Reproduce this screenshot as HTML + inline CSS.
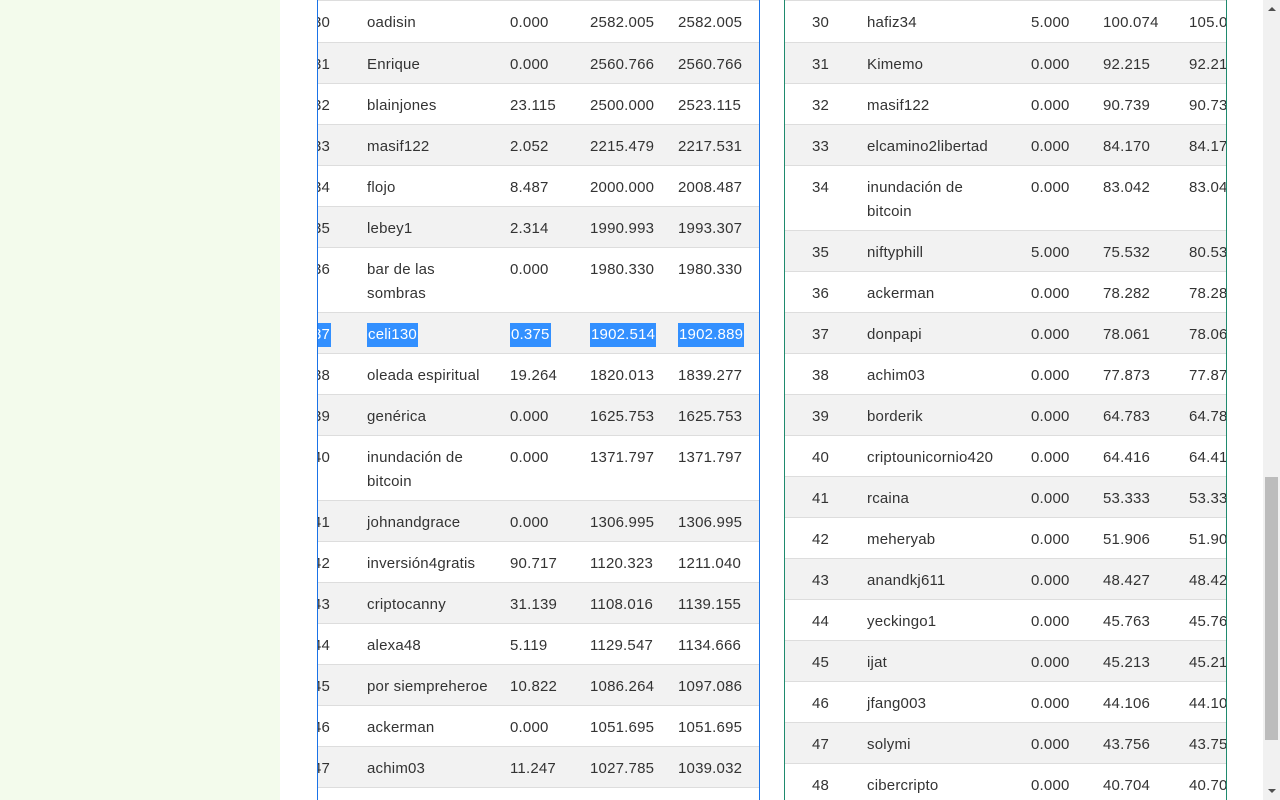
<!DOCTYPE html>
<html><head><meta charset="utf-8"><style>
*{margin:0;padding:0;box-sizing:border-box}
body{width:1280px;height:800px;overflow:hidden;background:#fff;font-family:"Liberation Sans",sans-serif;font-size:15px;color:#333;position:relative}
.side{position:absolute;left:0;top:0;width:280px;height:800px;background:#f3fbec}
.tbl{position:absolute;top:0;height:800px;overflow:hidden}
#t1{left:317px;width:443px;border-left:1px solid #1a73e8;border-right:1px solid #1a73e8}
#t2{left:784px;width:443px;border-left:1px solid #1f8a6e;border-right:1px solid #1f8a6e}
.r{position:absolute;left:0;width:1000px;border-top:1px solid #ddd}
.g{background:#f2f2f2}
.c{position:absolute;top:10px;line-height:24px;letter-spacing:0.2px}
.sel{background:#3390ff;color:#fff;padding:0 1px}
.sb{position:absolute;left:1263px;top:0;width:17px;height:800px;background:#f1f1f1}
.th{position:absolute;left:2px;top:477px;width:13px;height:263px;background:#bcbcbc}
</style></head><body>
<div class="side"></div>

<div class="tbl" id="t1">
<div class="r" style="top:0;height:42px"><span class="c" style="left:-5px">30</span><span class="c" style="left:49px">oadisin</span><span class="c" style="left:192px">0.000</span><span class="c" style="left:272px">2582.005</span><span class="c" style="left:360px">2582.005</span></div>
<div class="r g" style="top:42px;height:41px"><span class="c" style="left:-5px">31</span><span class="c" style="left:49px">Enrique</span><span class="c" style="left:192px">0.000</span><span class="c" style="left:272px">2560.766</span><span class="c" style="left:360px">2560.766</span></div>
<div class="r" style="top:83px;height:41px"><span class="c" style="left:-5px">32</span><span class="c" style="left:49px">blainjones</span><span class="c" style="left:192px">23.115</span><span class="c" style="left:272px">2500.000</span><span class="c" style="left:360px">2523.115</span></div>
<div class="r g" style="top:124px;height:41px"><span class="c" style="left:-5px">33</span><span class="c" style="left:49px">masif122</span><span class="c" style="left:192px">2.052</span><span class="c" style="left:272px">2215.479</span><span class="c" style="left:360px">2217.531</span></div>
<div class="r" style="top:165px;height:41px"><span class="c" style="left:-5px">34</span><span class="c" style="left:49px">flojo</span><span class="c" style="left:192px">8.487</span><span class="c" style="left:272px">2000.000</span><span class="c" style="left:360px">2008.487</span></div>
<div class="r g" style="top:206px;height:41px"><span class="c" style="left:-5px">35</span><span class="c" style="left:49px">lebey1</span><span class="c" style="left:192px">2.314</span><span class="c" style="left:272px">1990.993</span><span class="c" style="left:360px">1993.307</span></div>
<div class="r" style="top:247px;height:65px"><span class="c" style="left:-5px">36</span><span class="c" style="left:49px">bar de las<br>sombras</span><span class="c" style="left:192px">0.000</span><span class="c" style="left:272px">1980.330</span><span class="c" style="left:360px">1980.330</span></div>
<div class="r g" style="top:312px;height:41px"><span class="c sel" style="left:-6px">37</span><span class="c sel" style="left:49px">celi130</span><span class="c sel" style="left:192px">0.375</span><span class="c sel" style="left:272px">1902.514</span><span class="c sel" style="left:360px">1902.889</span></div>
<div class="r" style="top:353px;height:41px"><span class="c" style="left:-5px">38</span><span class="c" style="left:49px">oleada espiritual</span><span class="c" style="left:192px">19.264</span><span class="c" style="left:272px">1820.013</span><span class="c" style="left:360px">1839.277</span></div>
<div class="r g" style="top:394px;height:41px"><span class="c" style="left:-5px">39</span><span class="c" style="left:49px">genérica</span><span class="c" style="left:192px">0.000</span><span class="c" style="left:272px">1625.753</span><span class="c" style="left:360px">1625.753</span></div>
<div class="r" style="top:435px;height:65px"><span class="c" style="left:-5px">40</span><span class="c" style="left:49px">inundación de<br>bitcoin</span><span class="c" style="left:192px">0.000</span><span class="c" style="left:272px">1371.797</span><span class="c" style="left:360px">1371.797</span></div>
<div class="r g" style="top:500px;height:41px"><span class="c" style="left:-5px">41</span><span class="c" style="left:49px">johnandgrace</span><span class="c" style="left:192px">0.000</span><span class="c" style="left:272px">1306.995</span><span class="c" style="left:360px">1306.995</span></div>
<div class="r" style="top:541px;height:41px"><span class="c" style="left:-5px">42</span><span class="c" style="left:49px">inversión4gratis</span><span class="c" style="left:192px">90.717</span><span class="c" style="left:272px">1120.323</span><span class="c" style="left:360px">1211.040</span></div>
<div class="r g" style="top:582px;height:41px"><span class="c" style="left:-5px">43</span><span class="c" style="left:49px">criptocanny</span><span class="c" style="left:192px">31.139</span><span class="c" style="left:272px">1108.016</span><span class="c" style="left:360px">1139.155</span></div>
<div class="r" style="top:623px;height:41px"><span class="c" style="left:-5px">44</span><span class="c" style="left:49px">alexa48</span><span class="c" style="left:192px">5.119</span><span class="c" style="left:272px">1129.547</span><span class="c" style="left:360px">1134.666</span></div>
<div class="r g" style="top:664px;height:41px"><span class="c" style="left:-5px">45</span><span class="c" style="left:49px">por siempreheroe</span><span class="c" style="left:192px">10.822</span><span class="c" style="left:272px">1086.264</span><span class="c" style="left:360px">1097.086</span></div>
<div class="r" style="top:705px;height:41px"><span class="c" style="left:-5px">46</span><span class="c" style="left:49px">ackerman</span><span class="c" style="left:192px">0.000</span><span class="c" style="left:272px">1051.695</span><span class="c" style="left:360px">1051.695</span></div>
<div class="r g" style="top:746px;height:41px"><span class="c" style="left:-5px">47</span><span class="c" style="left:49px">achim03</span><span class="c" style="left:192px">11.247</span><span class="c" style="left:272px">1027.785</span><span class="c" style="left:360px">1039.032</span></div>
<div class="r" style="top:787px;height:41px"></div>
</div>

<div class="tbl" id="t2">
<div class="r" style="top:0;height:42px"><span class="c" style="left:27px">30</span><span class="c" style="left:82px">hafiz34</span><span class="c" style="left:246px">5.000</span><span class="c" style="left:318px">100.074</span><span class="c" style="left:404px">105.074</span></div>
<div class="r g" style="top:42px;height:41px"><span class="c" style="left:27px">31</span><span class="c" style="left:82px">Kimemo</span><span class="c" style="left:246px">0.000</span><span class="c" style="left:318px">92.215</span><span class="c" style="left:404px">92.215</span></div>
<div class="r" style="top:83px;height:41px"><span class="c" style="left:27px">32</span><span class="c" style="left:82px">masif122</span><span class="c" style="left:246px">0.000</span><span class="c" style="left:318px">90.739</span><span class="c" style="left:404px">90.739</span></div>
<div class="r g" style="top:124px;height:41px"><span class="c" style="left:27px">33</span><span class="c" style="left:82px">elcamino2libertad</span><span class="c" style="left:246px">0.000</span><span class="c" style="left:318px">84.170</span><span class="c" style="left:404px">84.170</span></div>
<div class="r" style="top:165px;height:65px"><span class="c" style="left:27px">34</span><span class="c" style="left:82px">inundación de<br>bitcoin</span><span class="c" style="left:246px">0.000</span><span class="c" style="left:318px">83.042</span><span class="c" style="left:404px">83.042</span></div>
<div class="r g" style="top:230px;height:41px"><span class="c" style="left:27px">35</span><span class="c" style="left:82px">niftyphill</span><span class="c" style="left:246px">5.000</span><span class="c" style="left:318px">75.532</span><span class="c" style="left:404px">80.532</span></div>
<div class="r" style="top:271px;height:41px"><span class="c" style="left:27px">36</span><span class="c" style="left:82px">ackerman</span><span class="c" style="left:246px">0.000</span><span class="c" style="left:318px">78.282</span><span class="c" style="left:404px">78.282</span></div>
<div class="r g" style="top:312px;height:41px"><span class="c" style="left:27px">37</span><span class="c" style="left:82px">donpapi</span><span class="c" style="left:246px">0.000</span><span class="c" style="left:318px">78.061</span><span class="c" style="left:404px">78.061</span></div>
<div class="r" style="top:353px;height:41px"><span class="c" style="left:27px">38</span><span class="c" style="left:82px">achim03</span><span class="c" style="left:246px">0.000</span><span class="c" style="left:318px">77.873</span><span class="c" style="left:404px">77.873</span></div>
<div class="r g" style="top:394px;height:41px"><span class="c" style="left:27px">39</span><span class="c" style="left:82px">borderik</span><span class="c" style="left:246px">0.000</span><span class="c" style="left:318px">64.783</span><span class="c" style="left:404px">64.783</span></div>
<div class="r" style="top:435px;height:41px"><span class="c" style="left:27px">40</span><span class="c" style="left:82px">criptounicornio420</span><span class="c" style="left:246px">0.000</span><span class="c" style="left:318px">64.416</span><span class="c" style="left:404px">64.416</span></div>
<div class="r g" style="top:476px;height:41px"><span class="c" style="left:27px">41</span><span class="c" style="left:82px">rcaina</span><span class="c" style="left:246px">0.000</span><span class="c" style="left:318px">53.333</span><span class="c" style="left:404px">53.333</span></div>
<div class="r" style="top:517px;height:41px"><span class="c" style="left:27px">42</span><span class="c" style="left:82px">meheryab</span><span class="c" style="left:246px">0.000</span><span class="c" style="left:318px">51.906</span><span class="c" style="left:404px">51.906</span></div>
<div class="r g" style="top:558px;height:41px"><span class="c" style="left:27px">43</span><span class="c" style="left:82px">anandkj611</span><span class="c" style="left:246px">0.000</span><span class="c" style="left:318px">48.427</span><span class="c" style="left:404px">48.427</span></div>
<div class="r" style="top:599px;height:41px"><span class="c" style="left:27px">44</span><span class="c" style="left:82px">yeckingo1</span><span class="c" style="left:246px">0.000</span><span class="c" style="left:318px">45.763</span><span class="c" style="left:404px">45.763</span></div>
<div class="r g" style="top:640px;height:41px"><span class="c" style="left:27px">45</span><span class="c" style="left:82px">ijat</span><span class="c" style="left:246px">0.000</span><span class="c" style="left:318px">45.213</span><span class="c" style="left:404px">45.213</span></div>
<div class="r" style="top:681px;height:41px"><span class="c" style="left:27px">46</span><span class="c" style="left:82px">jfang003</span><span class="c" style="left:246px">0.000</span><span class="c" style="left:318px">44.106</span><span class="c" style="left:404px">44.106</span></div>
<div class="r g" style="top:722px;height:41px"><span class="c" style="left:27px">47</span><span class="c" style="left:82px">solymi</span><span class="c" style="left:246px">0.000</span><span class="c" style="left:318px">43.756</span><span class="c" style="left:404px">43.756</span></div>
<div class="r" style="top:763px;height:41px"><span class="c" style="left:27px">48</span><span class="c" style="left:82px">cibercripto</span><span class="c" style="left:246px">0.000</span><span class="c" style="left:318px">40.704</span><span class="c" style="left:404px">40.704</span></div>
</div>

<div class="sb">
<div style="position:absolute;left:5px;top:7px;width:0;height:0;border-left:4px solid transparent;border-right:4px solid transparent;border-bottom:4px solid #505050"></div>
<div class="th"></div>
<div style="position:absolute;left:5px;bottom:7px;width:0;height:0;border-left:4px solid transparent;border-right:4px solid transparent;border-top:4px solid #505050"></div>
</div>
</body></html>
